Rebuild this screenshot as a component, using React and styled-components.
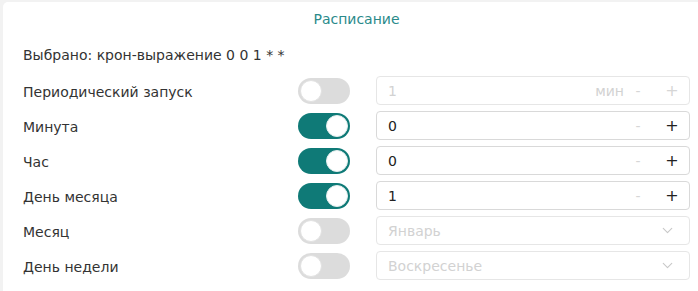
import React from 'react';
import styled, { createGlobalStyle } from 'styled-components';
import { ChevronDown } from 'lucide-react';

const GlobalStyle = createGlobalStyle`
  html, body {
    margin: 0;
    padding: 0;
    background: #f2f2f2;
    overflow: hidden;
  }
  body {
    padding: 2px 0 0 3px;
    font-family: "DejaVu Sans", "Noto Sans", sans-serif;
  }
`

const Card = styled.div`
  width: 700px;
  min-height: 300px;
  box-sizing: border-box;
  background: #fff;
  border-radius: 5px;
  padding: 7px 13px 0 20px;
`

const Title = styled.div`
  text-align: center;
  color: #2a8a8a;
  font-size: 14px;
  line-height: 20px;
`

const Selected = styled.div`
  margin-top: 16px;
  color: #333;
  font-size: 14px;
  line-height: 20px;
`

const Rows = styled.div`
  margin-top: 11px;
  display: flex;
  flex-direction: column;
  gap: 6px;
`

const Row = styled.div`
  display: grid;
  grid-template-columns: 249px 52px 1fr;
  column-gap: 26px;
  align-items: center;
  height: 29px;
`

const Label = styled.div`
  color: #333;
  font-size: 14px;
  padding-top: 2px;
`

const Toggle = styled.div`
  position: relative;
  width: 52px;
  height: 26px;
  border-radius: 13px;
  background: ${p => (p.on ? '#0f7a77' : '#dcdcdc')};

  &::after {
    content: '';
    position: absolute;
    top: 2px;
    left: ${p => (p.on ? '28px' : '2px')};
    width: 20px;
    height: 20px;
    border: 1px solid ${p => (p.on ? '#e4eeee' : '#e2e2e2')};
    border-radius: 50%;
    background: #fff;
  }
`

const Field = styled.div`
  display: flex;
  align-items: center;
  height: 29px;
  box-sizing: border-box;
  border: 1px solid ${p => (p.disabled ? '#e6e6e6' : '#d9d9d9')};
  border-radius: 4px;
  padding-left: 11px;
  font-size: 14px;
  color: ${p => (p.disabled ? '#d2d2d2' : '#222')};
`

const Value = styled.span`
  flex: 1;
`

const Unit = styled.span`
  color: #d2d2d2;
  margin-right: -3px;
`

const StepButton = styled.span`
  width: 34px;
  text-align: center;
  font-size: ${p => (p.plus ? '16px' : '14px')};
  color: ${p => (p.active ? '#222' : '#d6d6d6')};
`

const Chevron = styled.span`
  display: flex;
  width: 34px;
  justify-content: center;
  color: #c8c8c8;
  margin-right: 5px;
`

const rows = [
  { label: 'Периодический запуск', on: false, type: 'num', value: '1', unit: 'мин' },
  { label: 'Минута', on: true, type: 'num', value: '0' },
  { label: 'Час', on: true, type: 'num', value: '0' },
  { label: 'День месяца', on: true, type: 'num', value: '1' },
  { label: 'Месяц', on: false, type: 'select', value: 'Январь' },
  { label: 'День недели', on: false, type: 'select', value: 'Воскресенье' },
]

const renderField = row => {
  const disabled = !row.on
  if (row.type === 'select') {
    return (
      <Field disabled={disabled}>
        <Value>{row.value}</Value>
        <Chevron><ChevronDown size={17} strokeWidth={1.6} /></Chevron>
      </Field>
    )
  }
  return (
    <Field disabled={disabled}>
      <Value>{row.value}</Value>
      {row.unit && <Unit>{row.unit}</Unit>}
      <StepButton>-</StepButton>
      <StepButton plus active={!disabled}>+</StepButton>
    </Field>
  )
}

export default function App() {
  return (
    <>
      <GlobalStyle />
      <Card>
        <Title>Расписание</Title>
        <Selected>Выбрано: крон-выражение 0 0 1 * *</Selected>
        <Rows>
          {rows.map(row => (
            <Row key={row.label}>
              <Label>{row.label}</Label>
              <Toggle on={row.on ? 1 : 0} />
              {renderField(row)}
            </Row>
          ))}
        </Rows>
      </Card>
    </>
  )
}
